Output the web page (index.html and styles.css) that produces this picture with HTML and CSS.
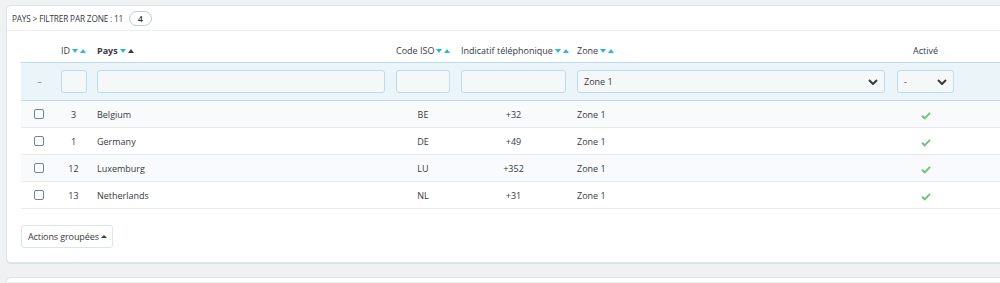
FILE: index.html
```html
<!DOCTYPE html>
<html lang="fr">
<head>
<meta charset="utf-8">
<link rel="stylesheet" href="styles.css">
</head>
<body>
<div class="panel">
  <div class="panel-heading">
    <span class="title">Pays &gt; Filtrer par zone : 11</span>
    <span class="badge">4</span>
  </div>
  <div class="table-wrap">
    <table class="list">
      <thead>
        <tr class="nodrag">
          <th class="c-check"></th>
          <th class="c-id"><span class="lbl">ID</span><span class="sort"><i class="down"></i><i class="up"></i></span></th>
          <th class="c-name"><span class="lbl strong">Pays</span><span class="sort"><i class="down"></i><i class="up active"></i></span></th>
          <th class="c-iso"><span class="lbl">Code ISO</span><span class="sort"><i class="down"></i><i class="up"></i></span></th>
          <th class="c-tel"><span class="lbl">Indicatif téléphonique</span><span class="sort"><i class="down"></i><i class="up"></i></span></th>
          <th class="c-zone"><span class="lbl">Zone</span><span class="sort"><i class="down"></i><i class="up"></i></span></th>
          <th class="c-act center"><span class="lbl">Activé</span></th>
          <th class="c-rest"></th>
        </tr>
        <tr class="filter">
          <th class="c-check"><span class="dash">–</span></th>
          <th class="c-id"><input class="fi" type="text"></th>
          <th class="c-name"><input class="fi" type="text"></th>
          <th class="c-iso"><input class="fi" type="text"></th>
          <th class="c-tel"><input class="fi" type="text"></th>
          <th class="c-zone"><div class="sel">Zone 1<svg class="chev" viewBox="0 0 10 6"><path d="M1 1l4 4 4-4" fill="none" stroke="#363a41" stroke-width="2"/></svg></div></th>
          <th class="c-act"><div class="sel">-<svg class="chev" viewBox="0 0 10 6"><path d="M1 1l4 4 4-4" fill="none" stroke="#363a41" stroke-width="2"/></svg></div></th>
          <th class="c-rest"></th>
        </tr>
      </thead>
      <tbody>
        <tr class="odd">
          <td class="c-check"><span class="cb"></span></td>
          <td class="c-id center">3</td>
          <td class="c-name">Belgium</td>
          <td class="c-iso center">BE</td>
          <td class="c-tel center">+32</td>
          <td class="c-zone">Zone 1</td>
          <td class="c-act center"><svg class="ok" viewBox="0 0 12 10"><path d="M1.2 5.2l3.3 3.2 6.3-6.6" fill="none" stroke="#72c279" stroke-width="2.4"/></svg></td>
          <td class="c-rest"></td>
        </tr>
        <tr>
          <td class="c-check"><span class="cb"></span></td>
          <td class="c-id center">1</td>
          <td class="c-name">Germany</td>
          <td class="c-iso center">DE</td>
          <td class="c-tel center">+49</td>
          <td class="c-zone">Zone 1</td>
          <td class="c-act center"><svg class="ok" viewBox="0 0 12 10"><path d="M1.2 5.2l3.3 3.2 6.3-6.6" fill="none" stroke="#72c279" stroke-width="2.4"/></svg></td>
          <td class="c-rest"></td>
        </tr>
        <tr class="odd">
          <td class="c-check"><span class="cb"></span></td>
          <td class="c-id center">12</td>
          <td class="c-name">Luxemburg</td>
          <td class="c-iso center">LU</td>
          <td class="c-tel center">+352</td>
          <td class="c-zone">Zone 1</td>
          <td class="c-act center"><svg class="ok" viewBox="0 0 12 10"><path d="M1.2 5.2l3.3 3.2 6.3-6.6" fill="none" stroke="#72c279" stroke-width="2.4"/></svg></td>
          <td class="c-rest"></td>
        </tr>
        <tr>
          <td class="c-check"><span class="cb"></span></td>
          <td class="c-id center">13</td>
          <td class="c-name">Netherlands</td>
          <td class="c-iso center">NL</td>
          <td class="c-tel center">+31</td>
          <td class="c-zone">Zone 1</td>
          <td class="c-act center"><svg class="ok" viewBox="0 0 12 10"><path d="M1.2 5.2l3.3 3.2 6.3-6.6" fill="none" stroke="#72c279" stroke-width="2.4"/></svg></td>
          <td class="c-rest"></td>
        </tr>
      </tbody>
    </table>
  </div>
  <div class="footer">
    <button class="btn">Actions groupées <span class="caret"></span></button>
  </div>
</div>
<div class="panel second"></div>
</body>
</html>
```

FILE: styles.css
```css
html, body {
  margin: 0;
  padding: 0;
}
body {
  background: #eff1f2;
  font-family: "Open Sans", "Liberation Sans", sans-serif;
  font-size: 9px;
  color: #363a41;
  padding: 5px 0 0 6px;
  overflow: hidden;
  height: 283px;
  box-sizing: border-box;
}
.panel {
  background: #fff;
  border: 1px solid #dbe6e9;
  border-right: none;
  border-radius: 5px 0 0 5px;
  box-shadow: 0 1px 0 #dde3e5;
  padding: 0 0 14px 14px;
  height: 242px;
  box-sizing: content-box;
}
.panel.second {
  margin-top: 14px;
  height: 4px;
  padding: 0;
  border-bottom: none;
  border-radius: 5px 0 0 0;
  box-shadow: none;
}
.panel-heading {
  height: 24px;
  display: flex;
  align-items: center;
  gap: 5px;
  margin-left: -14px;
  padding-left: 5px;
  border-bottom: 1px solid #eaedef;
}
.title {
  text-transform: uppercase;
  font-size: 9px;
  letter-spacing: -0.2px;
  transform: scaleX(0.92);
  transform-origin: left center;
  margin-right: -9px;
  color: #363a41;
}
.badge {
  display: inline-block;
  min-width: 11px;
  padding: 0 5px;
  height: 13px;
  line-height: 13px;
  border: 1px solid #bbcdd2;
  border-radius: 8px;
  font-size: 9px;
  text-align: center;
  color: #363a41;
  font-weight: 600;
}
.table-wrap {
  margin-top: 11px;
}
table.list {
  border-collapse: collapse;
  width: 100%;
  table-layout: fixed;
}
.list th, .list td {
  padding: 0;
  text-align: left;
  font-weight: normal;
  white-space: nowrap;
}
.c-check { width: 40px; }
.c-id { width: 36px; }
.c-name { width: 299px; }
.c-iso { width: 65px; }
.c-tel { width: 116px; }
.c-zone { width: 320px; }
.c-act { width: 57px; }
.c-rest { width: auto; }
tr.nodrag th {
  height: 18px;
  vertical-align: top;
  padding-top: 2px;
  font-size: 9px;
}
.lbl.strong { font-weight: 700; }
.center { text-align: center !important; }
td.c-id, td.c-iso, td.c-tel, .c-act { padding-right: 11px !important; }
.sort {
  display: inline-flex;
  gap: 2px;
  margin-left: 2px;
  vertical-align: 1px;
}
.sort i {
  display: inline-block;
  width: 0;
  height: 0;
  border-left: 3.5px solid transparent;
  border-right: 3.5px solid transparent;
}
.sort i.down { border-top: 4px solid #25b9d7; }
.sort i.up { border-bottom: 4px solid #25b9d7; }
.sort i.up.active { border-bottom-color: #363a41; }
tr.filter th {
  background: #eaf4f9;
  border-top: 1px solid #bbdaeb;
  border-bottom: 1px solid #bbdaeb;
  height: 37px;
  vertical-align: middle;
}
tr.filter th.c-check { text-align: center; padding-right: 3px; }
.dash { color: #6c868e; }
.fi {
  display: block;
  box-sizing: border-box;
  height: 23px;
  width: calc(100% - 11px);
  border: 1px solid #bbdaeb;
  border-radius: 3px;
  background: #f5f8f9;
  margin: 0;
  padding: 0;
}
.c-id .fi { width: 26px; }
.sel {
  display: flex;
  align-items: center;
  justify-content: space-between;
  box-sizing: border-box;
  height: 23px;
  width: calc(100% - 12px);
  border: 1px solid #bbdaeb;
  border-radius: 3px;
  background: #f5f8f9;
  padding: 0 6px 0 6px;
  font-size: 9px;
  color: #363a41;
}
.c-act .sel { width: 57px; }
.chev { width: 10px; height: 6px; }
tbody td {
  height: 26px;
  border-bottom: 1px solid #e5e9eb;
  vertical-align: middle;
  font-size: 9px;
  color: #363a41;
}
tbody tr.odd td { background: #f8fafc; }
tbody td.c-check { padding-left: 13px; }
.cb {
  display: block;
  width: 8px;
  height: 8px;
  border: 1px solid #6c868e;
  border-radius: 2px;
  background: #fff;
}
.ok { width: 10px; height: 9px; display: inline-block; vertical-align: middle; }
.footer {
  padding-top: 16px;
}
.btn {
  font-family: "Open Sans", "Liberation Sans", sans-serif;
  font-size: 9px;
  color: #363a41;
  background: #fff;
  border: 1px solid #dbe6e9;
  border-radius: 3px;
  height: 23px;
  padding: 0 5px 0 6px;
  margin-left: 0;
  display: inline-flex;
  align-items: center;
  gap: 2px;
  letter-spacing: -0.1px;
}
.caret {
  display: inline-block;
  width: 0;
  height: 0;
  border-left: 3px solid transparent;
  border-right: 3px solid transparent;
  border-bottom: 3.5px solid #363a41;
}
```
